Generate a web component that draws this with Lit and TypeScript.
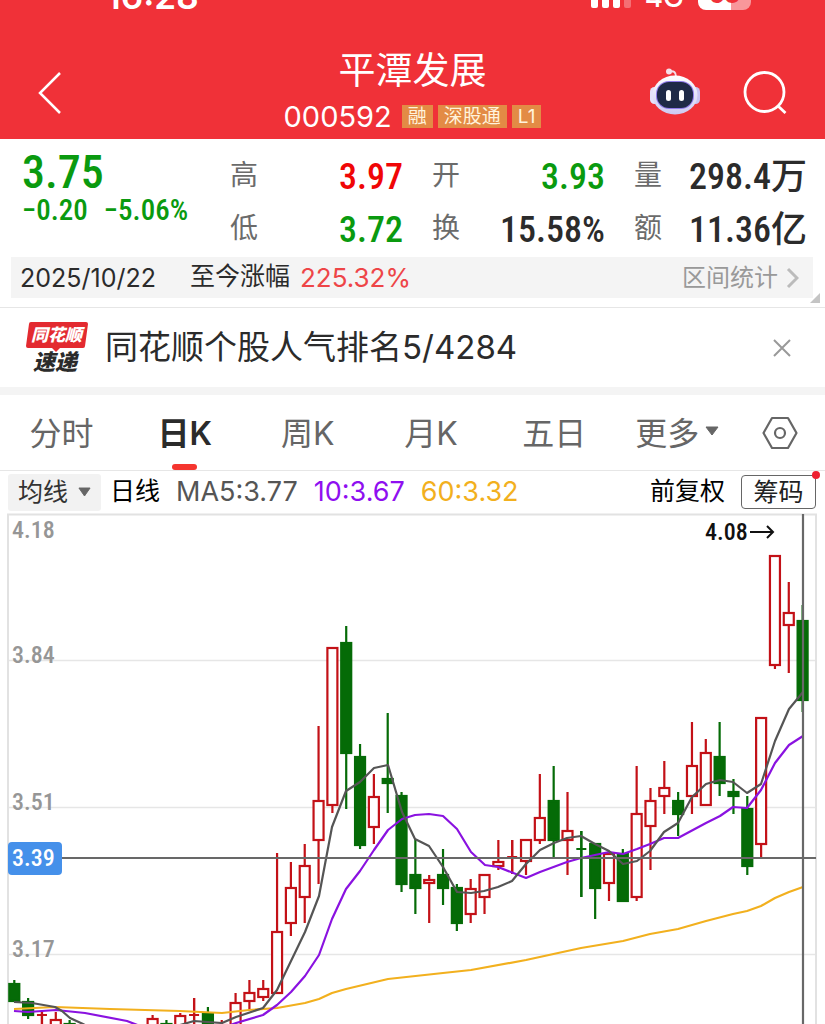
import { LitElement, html, svg, css } from "lit";
import { customElement, property, state } from "lit/decorators.js";
import { classMap } from "lit/directives/class-map.js";

type Kind = "up" | "down";
/** high, body top, body bottom, low (chart units), direction */
type Candle = [number, number, number, number, Kind];

const FIRST_X = 14.3;
const STEP = 13.83;

const CANDLES: Candle[] = [
  [980, 983, 1002, 1002, "down"],
  [998, 1001, 1016, 1019, "down"],
  [1011, 1015, 1015, 1030, "up"],
  [1012, 1019, 1030, 1034, "up"],
  [1020, 1023, 1034, 1036, "down"],
  [1028, 1030, 1040, 1044, "down"],
  [1030, 1034, 1042, 1046, "up"],
  [1030, 1034, 1044, 1046, "down"],
  [1030, 1034, 1042, 1046, "up"],
  [1028, 1030, 1040, 1044, "up"],
  [1015, 1018, 1030, 1034, "up"],
  [1020, 1023, 1034, 1036, "down"],
  [1013, 1015, 1027, 1030, "up"],
  [998, 1015, 1015, 1030, "up"],
  [1007, 1013, 1030, 1034, "down"],
  [1020, 1024, 1034, 1036, "up"],
  [993, 1002, 1030, 1034, "up"],
  [980, 992, 1002, 1010, "up"],
  [980, 988, 998, 1001, "up"],
  [853, 931, 994, 994, "up"],
  [862, 887, 924, 936, "up"],
  [844, 865, 898, 923, "up"],
  [726, 800, 841, 884, "up"],
  [647, 647, 806, 813, "up"],
  [626, 642, 754, 809, "down"],
  [744, 756, 846, 849, "down"],
  [774, 796, 828, 844, "up"],
  [713, 778, 784, 813, "down"],
  [792, 795, 885, 892, "down"],
  [839, 874, 889, 914, "down"],
  [875, 879, 884, 923, "up"],
  [849, 874, 889, 905, "down"],
  [884, 887, 924, 931, "down"],
  [879, 888, 915, 923, "up"],
  [874, 874, 898, 914, "up"],
  [840, 861, 867, 870, "up"],
  [840, 857, 857, 874, "up"],
  [839, 839, 862, 875, "up"],
  [774, 817, 841, 844, "up"],
  [766, 800, 841, 858, "down"],
  [792, 830, 841, 875, "up"],
  [831, 849, 849, 897, "down"],
  [843, 843, 889, 919, "down"],
  [851, 853, 884, 901, "up"],
  [849, 853, 902, 902, "down"],
  [766, 813, 898, 901, "up"],
  [788, 800, 827, 870, "up"],
  [761, 787, 797, 814, "up"],
  [792, 800, 815, 836, "down"],
  [722, 765, 797, 814, "up"],
  [739, 752, 806, 806, "up"],
  [722, 756, 784, 796, "down"],
  [779, 791, 797, 814, "down"],
  [796, 808, 867, 875, "down"],
  [717, 717, 845, 858, "up"],
  [555, 555, 666, 669, "up"],
  [582, 612, 626, 673, "up"],
  [605, 620, 701, 712, "down"],
];

const MA5 =
  "14,1002 32,1003 55,1007 62,1011 70,1018 83,1024 98,1032 140,1036 166,1028 180,1025 194,1021 222,1023 236,1017 263,1008 277,990 291,961 305,932 319,896 332,827 346,791 360,782 374,768 388,765 402,812 415,839 429,846 443,867 457,892 471,893 484,891 498,887 512,881 526,864 540,850 554,843 567,838 581,836 595,844 609,851 623,864 637,861 650,851 664,832 678,823 692,797 706,784 720,780 733,782 747,793 761,784 775,741 789,709 803,692";
const MA10 =
  "14,1011 28,1012 56,1010 85,1013 127,1021 140,1026 180,1034 222,1028 236,1023 263,1015 277,1005 291,992 305,976 319,955 332,919 346,889 360,871 374,850 388,830 402,819 415,815 429,814 443,816 457,829 471,852 485,865 498,867 526,878 540,872 567,862 581,858 609,852 623,854 637,849 650,844 664,838 678,838 706,823 720,816 733,807 747,808 761,790 775,763 789,745 803,736";
const MA60 =
  "14,1009 55,1007 110,1009 180,1011 222,1013 249,1010 277,1008 305,1003 319,999 332,993 346,989 388,979 443,973 471,970 526,960 581,948 623,941 650,934 678,929 706,921 733,914 747,911 761,906 775,898 789,892 803,887";

const GRID = [
  { y: 660, label: "3.84" },
  { y: 807, label: "3.51" },
  { y: 954, label: "3.17" },
];

@customElement("candle-chart")
export class CandleChart extends LitElement {
  static styles = css`
    :host {
      display: block;
    }
    .plot {
      display: block;
      width: 100%;
      height: auto;
    }
    .grid {
      stroke: #e6e6e6;
      stroke-width: 1.5;
      fill: none;
    }
    .frame {
      stroke: #e2e2e2;
      stroke-width: 2;
      fill: none;
    }
    .axis,
    .peak,
    .tag-text {
      font: 500 24px "Roboto Condensed", Roboto, sans-serif;
    }
    .axis {
      fill: #969696;
    }
    .peak {
      fill: #111;
    }
    .tag {
      fill: #4590ea;
    }
    .tag-text {
      fill: #fff;
    }
    .up {
      stroke: #c31117;
      fill: #fff;
      stroke-width: 2.2;
    }
    .down {
      stroke: #056b07;
      fill: #056b07;
      stroke-width: 2.2;
    }
    .ma {
      fill: none;
      stroke-width: 2.2;
      stroke-linejoin: round;
    }
    .ma5 {
      stroke: #555;
    }
    .ma10 {
      stroke: #8a12e0;
    }
    .ma60 {
      stroke: #f2b01e;
    }
    .cross {
      stroke: #686868;
      stroke-width: 2.2;
    }
    .arrow {
      fill: none;
      stroke: #111;
      stroke-width: 2;
    }
  `;

  private candle([high, top, bottom, low, kind]: Candle, i: number) {
    const x = FIRST_X + i * STEP;
    const height = Math.max(bottom - top - 2, 0);
    return svg`<g class=${kind}>
      <path d="M${x} ${high}V${top + 1}M${x} ${bottom - 1}V${low}" />
      ${
        height
          ? svg`<rect x=${x - 5} y=${top + 1} width="10" height=${height} />`
          : svg`<path d="M${x - 5} ${top}h10M${x} ${high}V${low}" />`
      }
    </g>`;
  }

  render() {
    return html`<svg class="plot" viewBox="0 513 825 513" role="img" aria-label="日K线图">
      ${GRID.map((g) => svg`<path class="grid" d="M8 ${g.y}.5H816" />`)}
      <path class="frame" d="M8 1030V514.5H816V1030" />
      <text class="axis" x="12" y="538">4.18</text>
      ${GRID.map((g) => svg`<text class="axis" x="12" y=${g.y + 3}>${g.label}</text>`)}
      ${CANDLES.map((c, i) => this.candle(c, i))}
      <polyline class="ma ma60" points=${MA60} />
      <polyline class="ma ma10" points=${MA10} />
      <polyline class="ma ma5" points=${MA5} />
      <path class="cross" d="M62 858H816M803 514V1030" />
      <rect class="tag" x="8" y="842" width="54" height="33" rx="4" />
      <text class="tag-text" x="12" y="866">3.39</text>
      <text class="peak" x="705" y="540">4.08</text>
      <path class="arrow" d="M750 532H773M767 526l6 6l-6 6" />
    </svg>`;
  }
}

@customElement("quote-stat")
export class QuoteStat extends LitElement {
  @property() label = "";
  @property() value = "";
  @property() tone = "";

  static styles = css`
    :host {
      display: flex;
      align-items: center;
      justify-content: space-between;
      height: 53px;
    }
    .label {
      font-size: 28px;
      line-height: 40px;
      padding-bottom: 4px;
      color: #6b6b6b;
    }
    .value {
      font: 500 36px/40px "Roboto Condensed", Roboto, "Noto Sans CJK SC", sans-serif;
      color: #2b2b2b;
      white-space: nowrap;
    }
    .value.rise {
      color: #f00606;
    }
    .value.fall {
      color: #0a9a0f;
    }
  `;

  render() {
    return html`<span class="label">${this.label}</span>
      <span class=${classMap({ value: true, [this.tone || "plain"]: true })}>${this.value}</span>`;
  }
}

@customElement("app-root")
export class AppRoot extends LitElement {
  @state() private tab = "日K";

  static styles = css`
    :host {
      display: block;
      height: 100vh;
      overflow: hidden;
      background: #fff;
      color: #2b2b2b;
      font-family: Inter, "Noto Sans CJK SC", sans-serif;
    }
    button,
    select {
      font: inherit;
      color: inherit;
      border: 0;
      padding: 0;
      background: none;
      cursor: pointer;
    }
    svg {
      display: block;
    }
    .top {
      background: #f03138;
      color: #fff;
    }
    .status {
      display: flex;
      align-items: flex-end;
      height: 10px;
      padding: 0 74px 0 106px;
    }
    .clock {
      flex: 1;
      font-size: 35px;
      font-weight: 600;
      line-height: 28px;
    }
    .net {
      font-size: 28px;
      font-weight: 500;
      line-height: 26px;
      margin: 0 14px;
    }
    .battery {
      box-sizing: border-box;
      width: 53px;
      height: 28px;
      border-radius: 8px;
      background: linear-gradient(90deg, #fff 62%, #f8979b 62%);
      color: #f03138;
      font-size: 24px;
      font-weight: 700;
      line-height: 26px;
      text-align: center;
    }
    .nav {
      display: grid;
      grid-template-columns: 1fr auto 1fr;
      height: 129px;
      align-items: center;
    }
    .back {
      margin: 36px 0 0 37px;
      justify-self: start;
    }
    .heading {
      padding-top: 30px;
      text-align: center;
    }
    .name {
      margin: 0;
      font-size: 37px;
      font-weight: 400;
      line-height: 54px;
    }
    .code-row {
      display: flex;
      align-items: center;
      gap: 5px;
      height: 37px;
    }
    .code {
      font-size: 29px;
      margin-right: 5px;
    }
    .badge {
      background: #e38b45;
      color: #fff3dc;
      font-size: 19px;
      line-height: 23px;
      padding: 0 6px;
    }
    .actions {
      display: flex;
      align-items: center;
      justify-content: flex-end;
      gap: 42px;
      padding: 34px 38px 0 0;
    }
    .quote {
      display: grid;
      grid-template-columns: 179px 1fr 1fr 1fr;
      column-gap: 29px;
      padding: 11px 18px 0 22px;
      height: 118px;
      box-sizing: border-box;
    }
    .last {
      grid-row: span 2;
      color: #0a9a0f;
      font-family: "Roboto Condensed", Roboto, sans-serif;
      display: flex;
      flex-direction: column;
    }
    .price {
      font-size: 46px;
      font-weight: 500;
      line-height: 44px;
    }
    .change {
      display: flex;
      gap: 16px;
      font-size: 29px;
      line-height: 32px;
      font-weight: 500;
      white-space: nowrap;
    }
    quote-stat {
      min-width: 0;
    }
    .range {
      display: flex;
      align-items: center;
      height: 41px;
      margin: 0 12px 9px 11px;
      padding: 0 14px 0 9px;
      background: #f4f4f4;
      font-size: 25px;
    }
    .since {
      margin: 0 10px 0 34px;
      line-height: 36px;
      padding-bottom: 3px;
    }
    .pct {
      flex: 1;
      color: #ee4547;
      font-size: 26px;
    }
    .interval {
      display: flex;
      align-items: center;
      gap: 8px;
      color: #999;
      font-size: 24px;
      line-height: 36px;
    }
    .summary {
      position: relative;
      border-bottom: 1px solid #e6e6e6;
    }
    .corner {
      position: absolute;
      right: 5px;
      bottom: 4px;
    }
    .news {
      display: flex;
      align-items: center;
      height: 79px;
      padding: 0 34px 0 25px;
      border-bottom: 8px solid #f4f4f4;
      font-size: 33px;
    }
    .news-text {
      flex: 1;
      margin-left: 16px;
      padding-bottom: 5px;
      color: #2b2b2b;
      text-decoration: none;
    }
    .logo-top,
    .logo-bottom {
      font-family: "Noto Sans CJK SC", sans-serif;
      font-weight: 900;
      font-style: italic;
    }
    .logo-top {
      font-size: 17px;
      fill: #fff;
    }
    .logo-bottom {
      font-size: 22px;
      fill: #2b2b2b;
    }
    .tabs {
      display: grid;
      grid-template-columns: repeat(6, 3fr) 2fr;
      height: 76px;
      padding-right: 4px;
      border-bottom: 1px solid #e6e6e6;
      box-sizing: border-box;
      font-size: 32px;
      color: #666;
    }
    .tab {
      position: relative;
      display: flex;
      align-items: center;
      justify-content: center;
      gap: 6px;
      padding-bottom: 4px;
    }
    .tab.icon {
      padding-bottom: 0;
    }
    .tab.on {
      color: #2b2b2b;
      font-weight: 600;
    }
    .tab.on::after {
      content: "";
      position: absolute;
      left: 50%;
      bottom: 0;
      width: 25px;
      margin-left: -13px;
      height: 6px;
      border-radius: 3px;
      background: #f5352f;
    }
    .legend {
      display: flex;
      align-items: center;
      height: 42px;
      padding: 0 9px 0 8px;
      gap: 16px;
      font-size: 25px;
      line-height: 36px;
      color: #555;
      white-space: nowrap;
    }
    .picker {
      display: flex;
      align-items: center;
      height: 37px;
      padding: 0 10px;
      margin-right: -7px;
      background: #f2f2f2;
      border-radius: 3px;
      color: #333;
    }
    .picker select {
      appearance: none;
      width: 60px;
      line-height: 36px;
    }
    .period,
    .adjust {
      padding-bottom: 3px;
      color: #000;
    }
    .ma {
      font-size: 27px;
    }
    .ten {
      color: #8f0ff0;
    }
    .sixty {
      color: #f2b01e;
      flex: 1;
    }
    .chips {
      position: relative;
      width: 75px;
      height: 34px;
      box-sizing: border-box;
      border: 1px solid #666;
      border-radius: 4px;
      color: #222;
      line-height: 30px;
    }
    .dot {
      position: absolute;
      top: -5px;
      right: -5px;
      width: 8px;
      height: 8px;
      border-radius: 50%;
      background: #ee2030;
    }
  `;

  private select(name: string) {
    this.tab = name;
  }

  private caret(size: number) {
    return html`<svg width=${size} height="10" viewBox="0 0 14 10" preserveAspectRatio="none" aria-hidden="true">
      <path d="M1 1h12L7 9z" fill="#666" stroke="#666" stroke-linejoin="round" />
    </svg>`;
  }

  render() {
    const tabs = ["分时", "日K", "周K", "月K", "五日", "更多"];
    return html`
      <header class="top">
        <div class="status">
          <span class="clock">16:28</span>
          <svg width="40" height="22" viewBox="0 0 40 22" aria-hidden="true">
            <g fill="#fff">
              <rect x="0" y="8" width="7" height="12" rx="2" />
              <rect x="11" y="5" width="7" height="15" rx="2" />
              <rect x="22" y="2" width="7" height="18" rx="2" />
              <rect x="33" y="0" width="7" height="20" rx="2" opacity=".3" />
            </g>
          </svg>
          <span class="net">4G</span>
          <span class="battery">63</span>
        </div>
        <div class="nav">
          <button class="back" aria-label="返回">
            <svg width="26" height="44" viewBox="0 0 26 44" fill="none" stroke="#fff" stroke-width="2.5">
              <path d="M23 2L3 22L23 42" />
            </svg>
          </button>
          <div class="heading">
            <h1 class="name">平潭发展</h1>
            <div class="code-row">
              <span class="code">000592</span>
              <span class="badge">融</span>
              <span class="badge">深股通</span>
              <span class="badge">L1</span>
            </div>
          </div>
          <div class="actions">
            <button aria-label="智能助手">
              <svg width="52" height="50" viewBox="0 0 52 50">
                <defs>
                  <linearGradient id="shell" x1="0" y1="0" x2="0" y2="1">
                    <stop offset="0" stop-color="#fff" />
                    <stop offset="1" stop-color="#cdc9f2" />
                  </linearGradient>
                </defs>
                <path d="M20 4.500C25 3.500 27 5 27 10" fill="none" stroke="#f3dfe9" stroke-width="2" />
                <circle cx="20" cy="4.500" r="3" fill="#f6dfe8" />
                <rect x="1" y="20" width="9" height="17" rx="4.500" fill="#e6e2fa" />
                <rect x="42" y="20" width="9" height="17" rx="4.500" fill="#c9c5f2" />
                <ellipse cx="26" cy="28" rx="22.500" ry="19.500" fill="url(#shell)" />
                <rect x="7" y="14" width="38" height="28" rx="13" fill="#8f7bea" />
                <rect x="8" y="15" width="36" height="26" rx="12" fill="#1f2a47" />
                <rect x="17" y="23" width="5" height="11" rx="2.500" fill="#fff" />
                <rect x="30" y="23" width="5" height="11" rx="2.500" fill="#fff" />
              </svg>
            </button>
            <button aria-label="搜索">
              <svg width="44" height="44" viewBox="0 0 44 44" fill="none" stroke="#fff" stroke-width="2.8">
                <circle cx="21.500" cy="22" r="19.500" />
                <path d="M35 36L42.500 43" />
              </svg>
            </button>
          </div>
        </div>
      </header>

      <section class="summary">
        <div class="quote">
          <div class="last">
            <span class="price">3.75</span>
            <span class="change"><span>−0.20</span><span>−5.06%</span></span>
          </div>
          <quote-stat label="高" value="3.97" tone="rise"></quote-stat>
          <quote-stat label="开" value="3.93" tone="fall"></quote-stat>
          <quote-stat label="量" value="298.4万"></quote-stat>
          <quote-stat label="低" value="3.72" tone="fall"></quote-stat>
          <quote-stat label="换" value="15.58%"></quote-stat>
          <quote-stat label="额" value="11.36亿"></quote-stat>
        </div>
        <div class="range">
          <span>2025/10/22</span>
          <span class="since">至今涨幅</span>
          <span class="pct">225.32%</span>
          <button class="interval">
            区间统计
            <svg width="13" height="22" viewBox="0 0 13 22" fill="none" stroke="#bbb" stroke-width="3">
              <path d="M2 2L11 11L2 20" />
            </svg>
          </button>
        </div>
        <svg class="corner" width="10" height="10" viewBox="0 0 10 10" aria-hidden="true">
          <path d="M10 0V10H0z" fill="#c4c4c4" />
        </svg>
      </section>

      <section class="news">
        <svg width="64" height="54" viewBox="0 0 64 54" role="img" aria-label="同花顺速递">
          <path d="M6 1H61Q63 1 63 3L60 25Q60 27 58 27H35L31 31L27 27H3Q1 27 1 25L4 3Q4 1 6 1z" fill="#e32a30" />
          <text class="logo-top" x="6" y="20">同花顺</text>
          <text class="logo-bottom" x="8" y="49">速递</text>
        </svg>
        <a class="news-text" href="#">同花顺个股人气排名5/4284</a>
        <button aria-label="关闭">
          <svg width="18" height="18" viewBox="0 0 18 18" stroke="#999" stroke-width="2">
            <path d="M1 1L17 17M17 1L1 17" />
          </svg>
        </button>
      </section>

      <nav class="tabs">
        ${tabs.map(
          (t) => html`<button class=${classMap({ tab: true, on: t === this.tab })} @click=${() => this.select(t)}>
            ${t}${t === "更多" ? this.caret(14) : ""}
          </button>`
        )}
        <button class="tab icon" aria-label="设置">
          <svg width="36" height="34" viewBox="0 0 36 34" fill="none" stroke="#666" stroke-width="2.2">
            <path d="M10 2H26L34.500 17L26 32H10L1.500 17z" stroke-linejoin="round" />
            <circle cx="18" cy="17" r="5" />
          </svg>
        </button>
      </nav>

      <div class="legend">
        <label class="picker">
          <select aria-label="指标">
            <option>均线</option>
          </select>
          ${this.caret(13)}
        </label>
        <span class="period">日线</span>
        <span class="ma">MA5:3.77</span>
        <span class="ma ten">10:3.67</span>
        <span class="ma sixty">60:3.32</span>
        <span class="adjust">前复权</span>
        <button class="chips">筹码<span class="dot"></span></button>
      </div>
      <candle-chart></candle-chart>
    `;
  }
}
